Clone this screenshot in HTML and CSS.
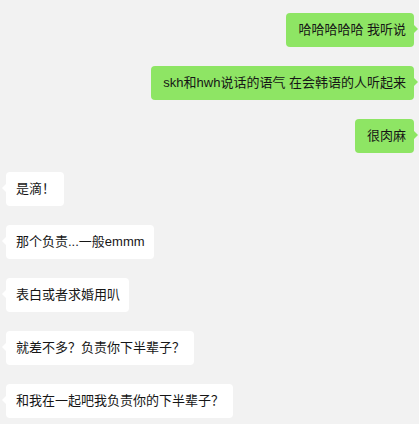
FILE: index.html
```html
<!DOCTYPE html>
<html lang="zh-CN">
<head>
  <meta charset="UTF-8" />
  <meta name="viewport" content="width=device-width, initial-scale=1.0" />
  <title>聊天</title>
  <link rel="stylesheet" href="styles.css">
</head>
<body>

<div class="chat">
  <div class="msg mine"><div class="bubble">哈哈哈哈哈 我听说</div></div>
  <div class="msg mine"><div class="bubble">skh和hwh说话的语气 在会韩语的人听起来</div></div>
  <div class="msg mine"><div class="bubble">很肉麻</div></div>
  <div class="msg"><div class="bubble">是滴！</div></div>
  <div class="msg"><div class="bubble">那个负责...一般emmm</div></div>
  <div class="msg"><div class="bubble">表白或者求婚用叭</div></div>
  <div class="msg"><div class="bubble">就差不多？负责你下半辈子？</div></div>
  <div class="msg"><div class="bubble">和我在一起吧我负责你的下半辈子？</div></div>
</div>

</body>
</html>
```

FILE: styles.css
```css
body {
  margin: 0;
  background: #f2f2f2;
  font-family: "Liberation Sans", "Noto Sans CJK SC", sans-serif;
  color: #161616;
}
.chat {
  display: flex;
  flex-direction: column;
  gap: 19px;
  padding: 13px 5px 0 6px;
}
.msg {
  display: flex;
  justify-content: flex-start;
}
.msg.mine {
  justify-content: flex-end;
}
.bubble {
  position: relative;
  height: 34px;
  line-height: 34px;
  padding: 0 9px 0 10px;
  font-size: 13px;
  background: #fff;
  border-radius: 4px;
  white-space: nowrap;
}
.bubble::before {
  content: "";
  position: absolute;
  top: 12px;
  left: -4px;
  border-style: solid;
  border-width: 4px 4px 4px 0;
  border-color: transparent #fff transparent transparent;
}
.mine .bubble {
  background: #8ee564;
  padding: 0 8px 0 12px;
}
.mine .bubble::before {
  left: auto;
  right: -4px;
  border-width: 4px 0 4px 4px;
  border-color: transparent transparent transparent #8ee564;
}
```
